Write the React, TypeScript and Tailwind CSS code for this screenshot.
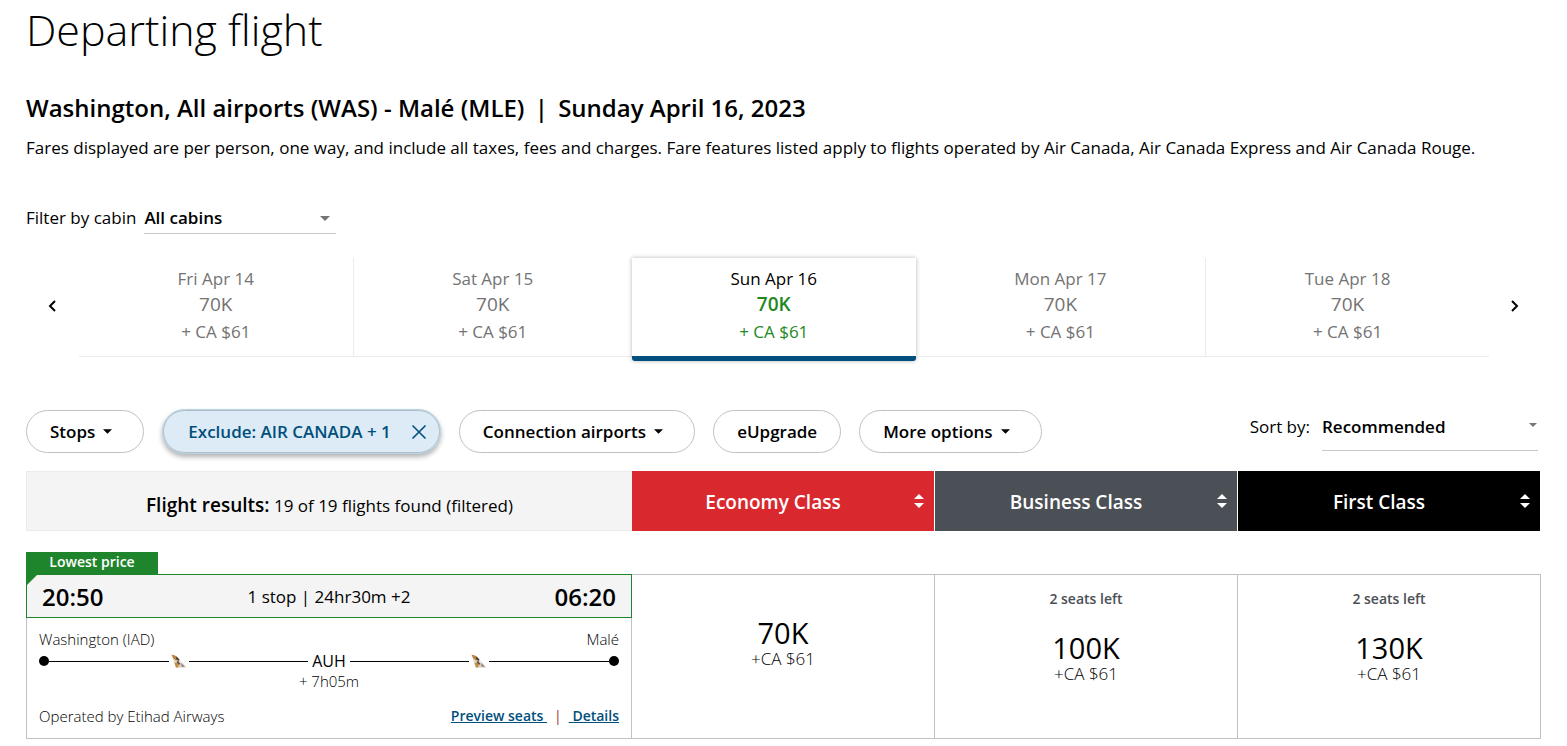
const days = [
  { date: "Fri Apr 14", points: "70K", cash: "+ CA $61" },
  { date: "Sat Apr 15", points: "70K", cash: "+ CA $61" },
  { date: "Sun Apr 16", points: "70K", cash: "+ CA $61", selected: true },
  { date: "Mon Apr 17", points: "70K", cash: "+ CA $61" },
  { date: "Tue Apr 18", points: "70K", cash: "+ CA $61" },
];

const cabins = [
  { name: "Economy Class", color: "bg-[#d9292f]", points: "70K", cash: "+CA $61", seats: "" },
  { name: "Business Class", color: "bg-[#4b4f56]", points: "100K", cash: "+CA $61", seats: "2 seats left" },
  { name: "First Class", color: "bg-black", points: "130K", cash: "+CA $61", seats: "2 seats left" },
];

function Caret({ className }: { className: string }) {
  return (
    <svg viewBox="0 0 10 5" className={className} fill="currentColor" aria-hidden="true">
      <path d="M0 0h10L5 5z" />
    </svg>
  );
}

function Pill({ label, caret }: { label: string; caret?: boolean }) {
  return (
    <button className="flex h-[43px] items-center gap-2 rounded-full border border-[#bfc1c6] bg-white px-[23px] font-semibold">
      {label}
      {caret && <Caret className="mr-2 h-[5px] w-[9px]" />}
    </button>
  );
}

function TailFin() {
  return (
    <svg viewBox="0 0 16 14" className="mx-0.5 h-[14px] w-4 shrink-0" aria-hidden="true">
      <path d="M0.5 0.5L5 2l10.5 11.5H5L3 8z" fill="#d5cabb" />
      <path d="M0.5 0.5L5 2l2 2.5-2 2-2.5-2z" fill="#b9813f" />
      <path d="M5.5 2.5l3 3-1 1.5L5 5z" fill="#4e3a33" />
      <path d="M2.5 5l2 1.5.5 3L3 8z" fill="#e6d9c4" />
      <path d="M3.5 9l2-.5 2 2.5-.5 2.5H5z" fill="#c98a35" />
      <path d="M6 7l2 .5 1.5 2L8 11 6 9z" fill="#6a544a" />
      <path d="M8.5 6.5l2 2-1 1L8 8z" fill="#f3eee6" />
      <path d="M10 9.5l2 1.5 1.5 1.5-2.5.2z" fill="#8a7a70" />
    </svg>
  );
}

function DateStrip() {
  return (
    <div className="mt-6 flex">
      <button className="flex w-[53px] items-center justify-center pr-0.5 pb-1" aria-label="Previous dates">
        <svg viewBox="0 0 8 12" className="h-3 w-2" fill="none" stroke="currentColor" strokeWidth="2">
          <path d="M7 1L2 6l5 5" />
        </svg>
      </button>
      <div className="flex flex-1">
        {days.map((day, i) =>
          day.selected ? (
            <button
              key={day.date}
              className="-mb-1 flex flex-auto flex-col items-center rounded-b-[3px] border-b-[5px] border-[#004f7c] bg-white pt-2 shadow-[0_0_4px_rgba(0,0,0,0.3)]"
            >
              <span className="leading-[26px]">{day.date}</span>
              <span className="text-[19px] leading-6 font-semibold text-[#1e8a1e]">{day.points}</span>
              <span className="leading-8 text-[#1e8a1e]">{day.cash}</span>
            </button>
          ) : (
            <button
              key={day.date}
              className={
                "flex flex-auto flex-col items-center border-b border-[#ececec] pt-2 pb-2 text-[#737373] " +
                (i === 0 || i === 3 ? "border-r" : "")
              }
            >
              <span className="leading-[26px]">{day.date}</span>
              <span className="text-[19px] leading-6">{day.points}</span>
              <span className="leading-8">{day.cash}</span>
            </button>
          ),
        )}
      </div>
      <button className="flex w-[52px] items-center justify-center pb-1" aria-label="Next dates">
        <svg viewBox="0 0 8 12" className="h-3 w-2" fill="none" stroke="currentColor" strokeWidth="2">
          <path d="M1 1l5 5-5 5" />
        </svg>
      </button>
    </div>
  );
}

function Filters() {
  return (
    <div className="mt-[52px] flex justify-between">
      <div className="flex items-center gap-[18px]">
        <Pill label="Stops" caret />
        <div className="rounded-full border border-[#b5d5e6] bg-[#dcebf5] shadow-[0_3px_5px_rgba(0,0,0,0.3)]">
          <div className="flex h-[43px] items-center gap-5 rounded-full border border-[#b3bdc6] pr-3 pl-6 text-[#004f7c]">
            <button className="font-semibold">Exclude: AIR CANADA + 1</button>
            <button aria-label="Remove airline filter">
              <svg viewBox="0 0 16 16" className="h-4 w-4" fill="none" stroke="currentColor" strokeWidth="1.6">
                <path d="M1.5 1.5l13 13M14.5 1.5l-13 13" />
              </svg>
            </button>
          </div>
        </div>
        <Pill label="Connection airports" caret />
        <Pill label="eUpgrade" />
        <Pill label="More options" caret />
      </div>
      <div className="mr-[3px] flex items-start gap-3">
        <label htmlFor="sort" className="pt-1.5 leading-6">
          Sort by:
        </label>
        <div className="relative w-[216px]">
          <select
            id="sort"
            className="h-[42px] w-full appearance-none border-b border-[#c8c8c8] bg-transparent pb-1.5 font-semibold outline-none"
          >
            <option>Recommended</option>
          </select>
          <Caret className="absolute top-3.5 right-px h-[4px] w-[8px] text-[#757575]" />
        </div>
      </div>
    </div>
  );
}

function ResultsHeader() {
  return (
    <div className="mt-[17px] grid grid-cols-[2fr_1fr_1fr_1fr]">
      <div className="flex items-center justify-center border border-r-0 border-[#ebebeb] bg-[#f4f4f4] pt-2">
        <p>
          <strong className="text-[19px] font-semibold">Flight results:</strong> 19 of 19 flights found (filtered)
        </p>
      </div>
      {cabins.map((cabin) => (
        <button
          key={cabin.name}
          className={`mr-px flex h-[60px] items-center pr-2.5 text-[19px] font-semibold text-white ${cabin.color}`}
        >
          <span className="flex-1 pt-0.5">{cabin.name}</span>
          <span className="flex flex-col gap-1">
            <Caret className="h-[5px] w-[10px] rotate-180" />
            <Caret className="h-[5px] w-[10px]" />
          </span>
        </button>
      ))}
    </div>
  );
}

function FlightSummary() {
  return (
    <div className="border-x border-[#bfc1c6]">
      <div className="relative -mx-px flex h-[44px] items-center justify-between border border-[#1f852d] bg-[#f4f4f4] px-[15px] pt-0.5">
        <svg viewBox="0 0 10 10" className="absolute top-0 left-0 h-2.5 w-2.5" fill="#1f852d">
          <path d="M0 0h10L0 10z" />
        </svg>
        <span className="text-2xl font-semibold">20:50</span>
        <span>1 stop | 24hr30m +2</span>
        <span className="text-2xl font-semibold">06:20</span>
      </div>
      <div className="px-3 pt-[11px] text-[15px] font-light">
        <div className="flex justify-between leading-5">
          <span>Washington (IAD)</span>
          <span>Malé</span>
        </div>
        <div className="flex items-center leading-6">
          <span className="h-2.5 w-2.5 rounded-full bg-black" />
          <span className="h-px flex-1 bg-black" />
          <TailFin />
          <span className="h-px flex-1 bg-black" />
          <span className="px-1 text-base leading-6 font-normal">AUH</span>
          <span className="h-px flex-1 bg-black" />
          <TailFin />
          <span className="h-px flex-1 bg-black" />
          <span className="h-2.5 w-2.5 rounded-full bg-black" />
        </div>
        <p className="text-center leading-4">+ 7h05m</p>
        <div className="mt-[17px] flex justify-between leading-5">
          <span>Operated by Etihad Airways</span>
          <span className="flex gap-1.5 text-sm leading-5 font-semibold text-[#004f7c]">
            <a href="#" className="whitespace-pre underline">
              {"Preview seats "}
            </a>
            <span className="px-px font-normal text-[#a3312d]">|</span>
            <a href="#" className="whitespace-pre underline">
              {" Details"}
            </a>
          </span>
        </div>
      </div>
    </div>
  );
}

export default function App() {
  return (
    <main className="bg-white px-[26px] pb-2 font-['Open_Sans',sans-serif] text-[17px] text-black">
      <h1 className="text-[43px] leading-[60px] font-light">Departing flight</h1>
      <h2 className="mt-[30px] text-2xl leading-9 font-semibold">
        Washington, All airports (WAS) - Malé (MLE) <span className="mx-1">|</span> Sunday April 16, 2023
      </h2>
      <p className="mt-2.5 leading-6">
        Fares displayed are per person, one way, and include all taxes, fees and charges. Fare features listed apply to
        flights operated by Air Canada, Air Canada Express and Air Canada Rouge.
      </p>
      <div className="mt-[42px] flex items-center gap-2">
        <label htmlFor="cabin">Filter by cabin</label>
        <div className="relative w-48">
          <select
            id="cabin"
            className="h-8 w-full appearance-none border-b border-[#c8c8c8] bg-transparent font-semibold outline-none"
          >
            <option>All cabins</option>
          </select>
          <Caret className="absolute top-3.5 right-1.5 h-[5px] w-[10px] text-[#757575]" />
        </div>
      </div>

      <DateStrip />
      <Filters />
      <ResultsHeader />

      <section className="mt-[21px]">
        <span className="block h-[22px] w-[132px] bg-[#1f852d] text-center text-sm leading-5 font-semibold text-white">
          Lowest price
        </span>
        <div className="grid grid-cols-[2fr_1fr_1fr_1fr] border-b border-[#bfc1c6]">
          <FlightSummary />
          {cabins.map((cabin) => (
            <button
              key={cabin.name}
              className="flex h-[164px] flex-col items-center border-t border-r border-[#bfc1c6] pt-3.5"
            >
              {cabin.seats && (
                <span className="mb-[23px] text-sm leading-5 font-semibold text-[#4b4f56]">{cabin.seats}</span>
              )}
              <span className={`text-[29px] leading-8 ${cabin.seats ? "" : "mt-7"}`}>{cabin.points}</span>
              <span className="leading-5 font-light">{cabin.cash}</span>
            </button>
          ))}
        </div>
      </section>
    </main>
  );
}
